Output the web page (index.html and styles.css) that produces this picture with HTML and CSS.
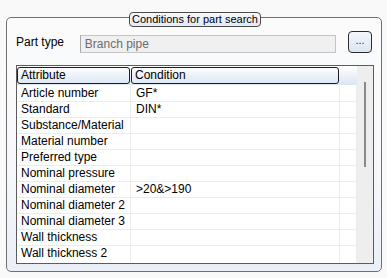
FILE: index.html
```html
<!DOCTYPE html>
<html lang="en">
<head>
  <meta charset="UTF-8">
  <title>Conditions for part search</title>
  <link rel="stylesheet" href="styles.css">
</head>
<body>
  <div class="group">
    <div class="group-title">Conditions for part search</div>

    <div class="part-row">
      <label class="part-label" for="partType">Part type</label>
      <input class="part-input" id="partType" type="text" value="Branch pipe" readonly>
      <button class="pick-btn" type="button">...</button>
    </div>

    <div class="grid">
      <div class="grid-main">
        <div class="grid-head">
          <div class="head-cell head-attr">Attribute</div>
          <div class="head-cell head-cond">Condition</div>
        </div>
        <div class="grid-body">
          <div class="row"><div class="cell">Article number</div><div class="cell val">GF*</div><div class="cell"></div></div>
          <div class="row"><div class="cell">Standard</div><div class="cell val">DIN*</div><div class="cell"></div></div>
          <div class="row"><div class="cell">Substance/Material</div><div class="cell val"></div><div class="cell"></div></div>
          <div class="row"><div class="cell">Material number</div><div class="cell val"></div><div class="cell"></div></div>
          <div class="row"><div class="cell">Preferred type</div><div class="cell val"></div><div class="cell"></div></div>
          <div class="row"><div class="cell">Nominal pressure</div><div class="cell val"></div><div class="cell"></div></div>
          <div class="row"><div class="cell">Nominal diameter</div><div class="cell val">&gt;20&amp;&gt;190</div><div class="cell"></div></div>
          <div class="row"><div class="cell">Nominal diameter 2</div><div class="cell val"></div><div class="cell"></div></div>
          <div class="row"><div class="cell">Nominal diameter 3</div><div class="cell val"></div><div class="cell"></div></div>
          <div class="row"><div class="cell">Wall thickness</div><div class="cell val"></div><div class="cell"></div></div>
          <div class="row last"><div class="cell">Wall thickness 2</div><div class="cell val"></div><div class="cell"></div></div>
        </div>
      </div>
      <div class="scrollbar"><div class="thumb"></div></div>
    </div>
  </div>
</body>
</html>
```

FILE: styles.css
```css
body {
  margin: 0;
  background: #f9f9f9;
  font-family: "Liberation Sans", Arial, sans-serif;
  font-size: 12px;
  color: #000;
}
.group {
  position: relative;
  margin: 17px 0 0 6px;
  width: 376px;
  height: 255px;
  box-sizing: border-box;
  border: 1px solid #707070;
  border-radius: 5px;
  background: linear-gradient(#fbfbfb, #f6f8fb 60%, #eaeff7);
  padding: 13px 9px 0 9px;
}
.group-title {
  position: absolute;
  top: -6px;
  left: 122px;
  height: 13px;
  line-height: 13px;
  padding: 0 2px 0 2px;
  border: 1px solid #4a4a4a;
  border-radius: 4px;
  background: linear-gradient(#f6f8fc, #e3eaf5);
  font-size: 11px;
  white-space: nowrap;
}
.part-row {
  display: flex;
  align-items: flex-end;
  height: 22px;
}
.part-label {
  width: 64px;
  line-height: 14px;
  padding-bottom: 4px;
}
.part-input {
  width: 257px;
  height: 18px;
  box-sizing: border-box;
  margin: 0;
  padding: 0 4px;
  border: 1px solid #c4c4c4;
  border-left-color: #a8a8a8;
  background: #f0f0f0;
  color: #6d6d6d;
  font: inherit;
  font-size: 12px;
}
.pick-btn {
  width: 24px;
  height: 22px;
  margin: 0 0 0 12px;
  padding: 0 0 3px 0;
  box-sizing: border-box;
  border: 1px solid #2b2b2b;
  border-radius: 4px;
  background: linear-gradient(#f4f7fc, #dce6f3);
  color: #1a237e;
  font: inherit;
  font-size: 11px;
  line-height: 1;
}
.grid {
  display: flex;
  margin-top: 12px;
  width: 358px;
  height: 199px;
  box-sizing: border-box;
  border: 1px solid #5c5c5c;
  background: #fff;
}
.grid-main {
  width: 340px;
}
.grid-head {
  display: flex;
  height: 19px;
  padding-top: 1px;
  box-sizing: border-box;
  background: linear-gradient(#ffffff, #dbe5f3);
}
.head-cell {
  height: 17px;
  box-sizing: border-box;
  border: 1px solid #1e1e1e;
  border-radius: 3px;
  padding-left: 3px;
  line-height: 15px;
}
.head-attr {
  width: 113px;
}
.head-cond {
  width: 208px;
  margin-left: 1px;
}
.grid-body {
  padding-top: 1px;
}
.row {
  display: grid;
  grid-template-columns: 114px 209px 17px;
  height: 16px;
}
.cell {
  box-sizing: border-box;
  border-right: 1px solid #ececec;
  border-bottom: 1px solid #ececec;
  padding-left: 4px;
  line-height: 15px;
  white-space: nowrap;
  overflow: hidden;
}
.cell.val {
  padding-left: 5px;
}
.row.last .cell {
  border-bottom: none;
}
.scrollbar {
  position: relative;
  width: 16px;
  background: #eeeeee;
}
.thumb {
  margin: 16px 0 0 7px;
  width: 2px;
  height: 85px;
  background: #8a8a8a;
}
```
